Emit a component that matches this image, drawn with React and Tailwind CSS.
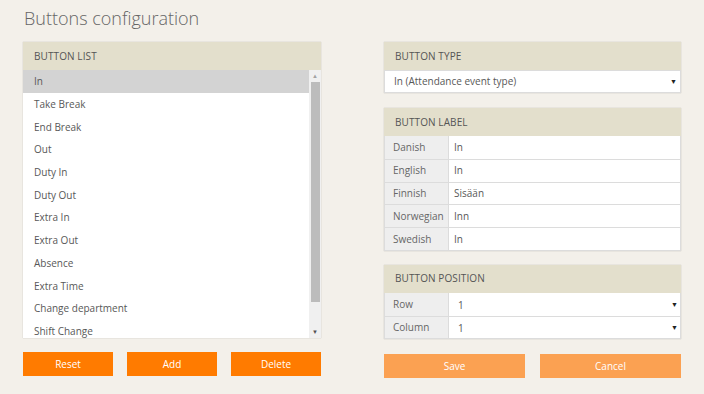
import React from "react";

const items = [
  "In",
  "Take Break",
  "End Break",
  "Out",
  "Duty In",
  "Duty Out",
  "Extra In",
  "Extra Out",
  "Absence",
  "Extra Time",
  "Change department",
  "Shift Change",
];

const labels = [
  ["Danish", "In"],
  ["English", "In"],
  ["Finnish", "Sisään"],
  ["Norwegian", "Inn"],
  ["Swedish", "In"],
];

function Header({ children }) {
  return (
    <div className="h-[28px] bg-[#e3dfcc] flex items-center px-[11px] text-[10px] uppercase text-[#555] tracking-[0.1px]">
      {children}
    </div>
  );
}

function Caret() {
  return <span className="text-[7px] text-[#222] leading-none">▼</span>;
}

export default function App() {
  return (
    <div
      className="w-[704px] h-[394px] bg-[#f3f0ea] px-[23px] overflow-hidden"
      style={{ fontFamily: '"Open Sans", "Noto Sans", sans-serif' }}
    >
      <h1 className="pt-[6px] h-[42px] text-[18px] font-light text-[#666] leading-[24px] pl-[1px]">
        Buttons configuration
      </h1>
      <div className="flex gap-[63px]">
        {/* Left column */}
        <div className="w-[298px] flex flex-col">
          <div className="shadow-[0_0_1px_rgba(0,0,0,0.25)]">
            <Header>Button list</Header>
            <div className="flex h-[268px] bg-white">
              <div className="flex-1 overflow-hidden">
                {items.map((it, i) => (
                  <div
                    key={it}
                    className={
                      "h-[22.7px] flex items-center pl-[11px] pt-[1px] text-[10px] text-[#585858] " +
                      (i === 0 ? "bg-[#d3d3d3]" : "")
                    }
                  >
                    {it}
                  </div>
                ))}
              </div>
              <div className="w-[12px] bg-[#f0f0f0] flex flex-col items-center">
                <div className="h-[12px] flex items-center justify-center text-[6px] text-[#a3a3a3] leading-none">
                  ▲
                </div>
                <div className="w-[9px] h-[220px] bg-[#bcbcbc]" />
                <div className="flex-1" />
                <div className="h-[12px] flex items-center justify-center text-[6px] text-[#505050] leading-none">
                  ▼
                </div>
              </div>
            </div>
          </div>
          <div className="flex justify-between mt-[14px]">
            {["Reset", "Add", "Delete"].map((b) => (
              <div
                key={b}
                className="w-[90px] h-[24px] bg-[#ff7b00] text-white text-[10px] flex items-center justify-center"
              >
                {b}
              </div>
            ))}
          </div>
        </div>

        {/* Right column */}
        <div className="w-[297px] flex flex-col">
          <div className="shadow-[0_0_1px_rgba(0,0,0,0.25)]">
            <Header>Button type</Header>
            <div className="h-[23px] bg-white border border-[#dcdcdc] flex items-center justify-between pl-[9px] pr-[3px] text-[10px] text-[#585858]">
              <span>In (Attendance event type)</span>
              <Caret />
            </div>
          </div>

          <div className="mt-[15px] shadow-[0_0_1px_rgba(0,0,0,0.25)]">
            <Header>Button label</Header>
            <div className="border border-[#dcdcdc] border-t-0">
              {labels.map(([l, v], i) => (
                <div
                  key={l}
                  className={
                    "flex h-[22.8px] " + (i > 0 ? "border-t border-[#dcdcdc]" : "")
                  }
                >
                  <div className="w-[64px] bg-[#eeeeee] border-r border-[#dcdcdc] flex items-center pl-[8px] text-[10px] text-[#666]">
                    {l}
                  </div>
                  <div className="flex-1 bg-white flex items-center pl-[5px] text-[10px] text-[#585858]">
                    {v}
                  </div>
                </div>
              ))}
            </div>
          </div>

          <div className="mt-[14px] shadow-[0_0_1px_rgba(0,0,0,0.25)]">
            <Header>Button position</Header>
            <div className="border border-[#dcdcdc] border-t-0">
              {[
                ["Row", "1"],
                ["Column", "1"],
              ].map(([l, v], i) => (
                <div
                  key={l}
                  className={
                    "flex h-[22.6px] " + (i > 0 ? "border-t border-[#dcdcdc]" : "")
                  }
                >
                  <div className="w-[64px] bg-[#eeeeee] border-r border-[#dcdcdc] flex items-center pl-[8px] text-[10px] text-[#666]">
                    {l}
                  </div>
                  <div className="flex-1 bg-white flex items-center justify-between pl-[9px] pr-[2px] text-[10px] text-[#585858]">
                    <span className="pt-[2px]">{v}</span>
                    <Caret />
                  </div>
                </div>
              ))}
            </div>
          </div>

          <div className="flex justify-between mt-[15px]">
            {["Save", "Cancel"].map((b) => (
              <div
                key={b}
                className="w-[141px] h-[24px] bg-[#fba152] text-white text-[10px] flex items-center justify-center"
              >
                {b}
              </div>
            ))}
          </div>
        </div>
      </div>
    </div>
  );
}
